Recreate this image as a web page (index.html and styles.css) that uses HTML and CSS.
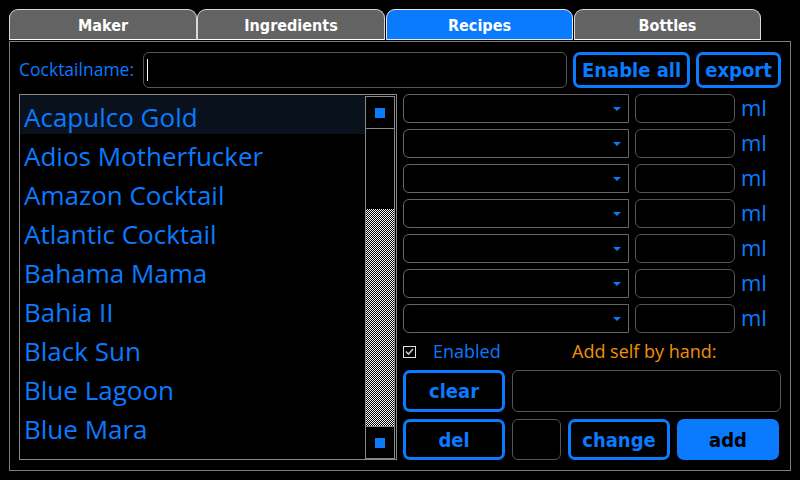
FILE: index.html
```html
<!DOCTYPE html>
<html>
<head>
<meta charset="utf-8">
<link rel="stylesheet" href="styles.css">
</head>
<body>
<div class="tabs">
  <div class="tab t1">Maker</div>
  <div class="tab t2">Ingredients</div>
  <div class="tab t3 active">Recipes</div>
  <div class="tab t4">Bottles</div>
</div>
<div class="panel">
  <div class="toprow">
    <div class="label">Cocktailname:</div>
    <div class="field name"><span class="caret"></span></div>
    <div class="btn enable">Enable all</div>
    <div class="btn export">export</div>
  </div>
  <div class="main">
    <div class="list">
      <div class="items">
        <div class="item sel">Acapulco Gold</div>
        <div class="item">Adios Motherfucker</div>
        <div class="item">Amazon Cocktail</div>
        <div class="item">Atlantic Cocktail</div>
        <div class="item">Bahama Mama</div>
        <div class="item">Bahia II</div>
        <div class="item">Black Sun</div>
        <div class="item">Blue Lagoon</div>
        <div class="item">Blue Mara</div>
        <div class="item">Brandy Alexander</div>
      </div>
      <div class="scroll">
        <div class="sbtn"><span class="sq"></span></div>
        <div class="thumb"></div>
        <div class="track"></div>
        <div class="sbtn bottom"><span class="sq"></span></div>
      </div>
    </div>
    <div class="right">
      <div class="rows">
        <div class="row"><div class="combo"><span class="arrow"></span></div><div class="field amt"></div><span class="ml">ml</span></div>
        <div class="row"><div class="combo"><span class="arrow"></span></div><div class="field amt"></div><span class="ml">ml</span></div>
        <div class="row"><div class="combo"><span class="arrow"></span></div><div class="field amt"></div><span class="ml">ml</span></div>
        <div class="row"><div class="combo"><span class="arrow"></span></div><div class="field amt"></div><span class="ml">ml</span></div>
        <div class="row"><div class="combo"><span class="arrow"></span></div><div class="field amt"></div><span class="ml">ml</span></div>
        <div class="row"><div class="combo"><span class="arrow"></span></div><div class="field amt"></div><span class="ml">ml</span></div>
        <div class="row"><div class="combo"><span class="arrow"></span></div><div class="field amt"></div><span class="ml">ml</span></div>
      </div>
      <div class="enrow">
        <span class="check"><svg width="11" height="11" viewBox="0 0 11 11"><path d="M2 5.5 L4.5 8 L9 3" fill="none" stroke="#c8c8c8" stroke-width="1.6"/></svg></span>
        <span class="enabled">Enabled</span>
        <span class="hand">Add self by hand:</span>
      </div>
      <div class="brow r1">
        <div class="btn act">clear</div>
        <div class="field wide"></div>
      </div>
      <div class="brow r2">
        <div class="btn act">del</div>
        <div class="field small"></div>
        <div class="btn act">change</div>
        <div class="btn act fill">add</div>
      </div>
    </div>
  </div>
</div>
</body>
</html>
```
FILE: styles.css
```css
* { box-sizing: border-box; }
html, body { margin: 0; padding: 0; }
body {
  width: 800px; height: 480px; overflow: hidden;
  background: #000;
  font-family: "Open Sans", "Noto Sans", sans-serif;
  color: #0a7aff;
}
.tabs {
  display: flex;
  padding: 9px 0 0 9px;
  height: 40px;
}
.tab {
  width: 188px; height: 31px;
  background: #636363;
  border: 1px solid #d8d8d8;
  border-bottom-color: #fff;
  border-radius: 9px 9px 0 0;
  color: #fff;
  font-family: "DejaVu Sans", sans-serif;
  font-stretch: condensed;
  font-weight: bold;
  font-size: 16px;
  display: flex; align-items: center; justify-content: center;
  padding-top: 1px;
}
.tab.t3, .tab.t4 { width: 187px; margin-left: 1px; }
.tab.active { background: #0a7aff; border-color: #e8e8e8; }
.panel {
  margin: 1px 9px 0 9px;
  height: 430px;
  border: 1px solid #7c7c7c;
  padding: 10px 9px 0 9px;
}
.toprow {
  display: flex; align-items: center;
  height: 36px;
}
.label { width: 124px; font-size: 17.5px; padding-bottom: 2px; }
.field {
  border: 1px solid #555;
  border-radius: 6px;
  background: #000;
}
.name { width: 424px; height: 36px; margin-right: 6px; position: relative; }
.caret { position: absolute; left: 3px; top: 6px; width: 1px; height: 22px; background: #fff; }
.btn {
  border: 3px solid #0a7aff;
  border-radius: 7px;
  color: #0a7aff;
  font-family: "DejaVu Sans", sans-serif;
  font-stretch: condensed;
  font-weight: bold;
  font-size: 20px;
  display: flex; align-items: center; justify-content: center;
}
.enable { width: 117px; height: 36px; margin-right: 6px; }
.export { width: 85px; height: 36px; }
.main {
  display: grid;
  grid-template-columns: 378px 378px;
  gap: 6px;
  margin-top: 6px;
}
.list {
  height: 366px;
  border: 1px solid #888;
  display: flex;
  overflow: hidden;
}
.items { flex: 1; overflow: hidden; }
.item {
  height: 39px;
  padding-left: 4px;
  font-size: 26px;
  line-height: 44px;
  white-space: nowrap;
  overflow: hidden;
}
.item.sel { background: #08111c; }
.scroll {
  width: 30px;
  margin: 1px 1px 0 0;
  height: 363px;
  border: 1px solid #888;
  display: flex; flex-direction: column;
}
.sbtn {
  height: 32px;
  border-bottom: 1px solid #888;
  display: flex; align-items: center; justify-content: center;
}
.sbtn.bottom { border-bottom: 0; border-top: 1px solid #888; }
.sq { width: 10px; height: 10px; background: #0a7aff; }
.thumb { height: 80px; }
.track {
  flex: 1;
  background: repeating-conic-gradient(#fff 0 25%, #000 0 50%) 0 0 / 2px 2px;
}
.rows { display: flex; flex-direction: column; gap: 6px; }
.row { display: flex; align-items: center; height: 29px; }
.combo {
  width: 226px; height: 29px;
  border: 1px solid #666;
  border-radius: 6px 0 0 6px;
  position: relative;
}
.arrow {
  position: absolute; right: 7px; top: 12px;
  border-left: 4px solid transparent;
  border-right: 4px solid transparent;
  border-top: 4px solid #0a7aff;
}
.amt { width: 100px; height: 29px; margin-left: 6px; }
.ml { margin-left: 6px; font-size: 22px; line-height: 29px; padding-bottom: 2px; }
.enrow {
  height: 37px;
  display: flex; align-items: center;
  font-size: 18px;
}
.check {
  width: 13px; height: 12px;
  border: 1px solid #e0e0e0;
  display: flex; align-items: center; justify-content: center;
  margin-right: 17px;
}
.enabled { width: 139px; padding-bottom: 2px; }
.hand { color: #f0900a; padding-bottom: 2px; }
.brow { display: flex; gap: 7px; }
.r1 { height: 42px; margin-bottom: 7px; }
.r2 { height: 41px; }
.brow .btn { width: 102px; }
.wide { flex: 1; }
.small { width: 49px; }
.fill { background: #0a7aff; color: #000; }
```
